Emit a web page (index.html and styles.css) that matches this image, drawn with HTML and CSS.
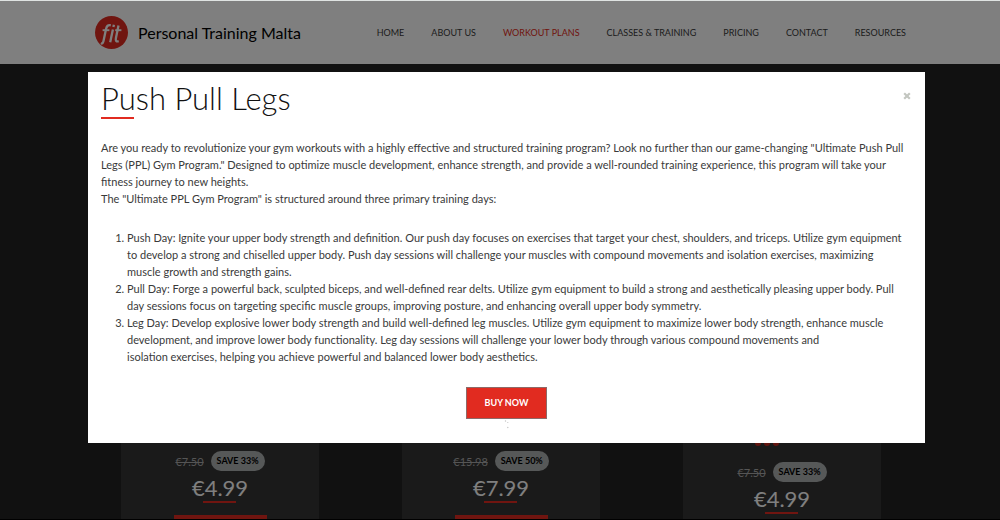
FILE: index.html
```html
<!DOCTYPE html>
<html lang="en">
<head>
<meta charset="utf-8">
<meta name="viewport" content="width=device-width, initial-scale=1">
<title>Personal Training Malta</title>
<link rel="stylesheet" href="styles.css">
</head>
<body>
<div class="page">
  <header class="header">
    <a class="brand" href="#">
      <svg class="logo" viewBox="0 0 33 33" aria-hidden="true">
        <circle cx="16.500" cy="16.500" r="16.500" fill="#e12b20"/>
        <g fill="none" stroke="#fff" stroke-width="2.300">
          <path d="M5.800 27.300c1.500.6 2.300-.4 2.700-2.200l2.600-12.300c.6-2.800 1.900-4.200 4.700-3.500"/>
          <path d="M7.600 14.200h6.800" stroke-width="1.900"/>
          <path d="M17.900 13.400l-2.700 12.900"/>
          <path d="M18.900 8.800l-.5 2.300"/>
          <path d="M23.500 9.600l-2.600 12.600c-.5 2.500.3 3.700 2.800 3"/>
          <path d="M20.200 14.200h6.200" stroke-width="1.900"/>
        </g>
      </svg>
      <span class="brand-name">Personal Training Malta</span>
    </a>
    <nav class="nav">
      <a href="#">HOME</a>
      <a href="#">ABOUT US</a>
      <a class="active" href="#">WORKOUT PLANS</a>
      <a href="#">CLASSES &amp; TRAINING</a>
      <a href="#">PRICING</a>
      <a href="#">CONTACT</a>
      <a href="#">RESOURCES</a>
    </nav>
  </header>
  <main class="plans">
    <article class="card">
      <p class="offer"><del>€7.50</del><span class="save">SAVE 33%</span></p>
      <p class="price">€4.99</p>
      <div class="card-action"></div>
    </article>
    <article class="card">
      <p class="offer"><del>€15.98</del><span class="save">SAVE 50%</span></p>
      <p class="price">€7.99</p>
      <div class="card-action"></div>
    </article>
    <article class="card card-rated">
      <div class="dots"><i></i><i></i><i></i></div>
      <p class="offer"><del>€7.50</del><span class="save">SAVE 33%</span></p>
      <p class="price">€4.99</p>
    </article>
  </main>
</div>
<div class="overlay">
  <section class="dialog" role="dialog" aria-labelledby="dialog-title">
    <div class="dialog-head">
      <h1 id="dialog-title">Push Pull Legs</h1>
      <button class="close" type="button" aria-label="Close">
        <svg viewBox="0 0 8 8" aria-hidden="true"><path d="M1.200 1.200l5.600 5.600M6.800 1.200L1.200 6.800" stroke="#c3c6c0" stroke-width="2.200"/></svg>
      </button>
    </div>
    <p>Are you ready to revolutionize your gym workouts with a highly effective and structured training program? Look no further than our game-changing "Ultimate Push Pull<br>Legs (PPL) Gym Program." Designed to optimize muscle development, enhance strength, and provide a well-rounded training experience, this program will take your<br>fitness journey to new heights.</p>
    <p>The "Ultimate PPL Gym Program" is structured around three primary training days:</p>
    <ol class="days">
      <li>Push Day: Ignite your upper body strength and definition. Our push day focuses on exercises that target your chest, shoulders, and triceps. Utilize gym equipment<br>to develop a strong and chiselled upper body. Push day sessions will challenge your muscles with compound movements and isolation exercises, maximizing<br>muscle growth and strength gains.</li>
      <li>Pull Day: Forge a powerful back, sculpted biceps, and well-defined rear delts. Utilize gym equipment to build a strong and aesthetically pleasing upper body. Pull<br>day sessions focus on targeting specific muscle groups, improving posture, and enhancing overall upper body symmetry.</li>
      <li>Leg Day: Develop explosive lower body strength and build well-defined leg muscles. Utilize gym equipment to maximize lower body strength, enhance muscle<br>development, and improve lower body functionality. Leg day sessions will challenge your lower body through various compound movements and<br>isolation exercises, helping you achieve powerful and balanced lower body aesthetics.</li>
    </ol>
    <div class="actions">
      <button class="buy" type="button">BUY NOW</button>
      <svg class="loader" viewBox="0 0 12 12" aria-hidden="true"><g fill="#c4c4c4"><circle cx="4.500" cy="2" r=".7"/><circle cx="6.800" cy="3.500" r=".6"/><circle cx="6.800" cy="8.500" r=".7"/></g></svg>
    </div>
  </section>
</div>
</body>
</html>
```
FILE: styles.css
```css
* {
  box-sizing: border-box;
}

body {
  margin: 0;
  background: #000;
  font-family: Lato, "Open Sans", sans-serif;
  font-size: 11px;
  line-height: 17px;
  color: #3a3a3a;
}

p, h1, ol {
  margin: 0;
}

a {
  color: inherit;
  text-decoration: none;
}

.page {
  display: flex;
  flex-direction: column;
  height: 100vh;
  overflow: hidden;
  border-top: 1px solid #dfe3e2;
  border-bottom: 1px solid #000;
}

.header {
  display: flex;
  align-items: center;
  justify-content: space-between;
  padding: 15px 94px 15px 95px;
  background: #fff;
}

.brand {
  display: flex;
  align-items: center;
  gap: 10px;
}

.logo {
  width: 33px;
  height: 33px;
}

.brand-name {
  font-size: 16px;
  color: #000;
}

.nav {
  display: flex;
  gap: 27px;
  font-size: 9px;
}

.nav .active {
  color: #e12b20;
}

.plans {
  flex: 1;
  display: grid;
  grid-template-columns: repeat(3, 1fr);
  gap: 83px;
  padding: 60px 119px 0 121px;
  background: #222;
}

.card {
  display: flex;
  flex-direction: column;
  align-items: center;
  padding-top: 327px;
  background: #343434;
}

.card-rated {
  padding-top: 316px;
}

.dots {
  display: flex;
  gap: 3px;
  margin: 0 30px 16px 0;
}

.dots i {
  width: 6px;
  height: 6px;
  border-radius: 3px;
  background: #c52a20;
}

.offer {
  display: flex;
  align-items: center;
  gap: 7px;
  color: #aaa;
}

.save {
  padding: 2px 6px;
  border-radius: 10px;
  font-size: 9px;
  line-height: 16px;
  font-weight: 700;
  color: #000;
  background: #adb0b0;
}

.price {
  display: flex;
  flex-direction: column;
  align-items: center;
  margin-top: 4px;
  font-size: 22px;
  line-height: 26px;
  color: #fff;
}

.price::after {
  content: "";
  width: 33px;
  height: 2px;
  background: #e12b20;
}

.card-action {
  width: 93px;
  height: 31px;
  flex-shrink: 0;
  margin-top: 12px;
  background: #e12b20;
}

.overlay {
  position: fixed;
  inset: 1px 0 0;
  padding: 71px 75px 0 88px;
  background: rgba(0, 0, 0, 0.5);
}

.dialog {
  padding: 8px 13px 12px;
  background: #fff;
}

.dialog-head {
  display: flex;
  align-items: flex-start;
  justify-content: space-between;
  margin-bottom: 20px;
}

h1 {
  font-size: 31px;
  line-height: 37px;
  font-weight: 300;
  color: #111;
}

h1::after {
  content: "";
  display: block;
  width: 33px;
  height: 2px;
  background: #e12b20;
}

.close {
  display: flex;
  margin-top: 12px;
  padding: 0 1px;
  border: 0;
  background: none;
}

.close svg {
  width: 8px;
  height: 8px;
}

.days {
  margin-top: 22px;
  padding-left: 26px;
}

.actions {
  display: flex;
  flex-direction: column;
  align-items: center;
  margin-top: 22px;
}

.buy {
  padding: 6px 18px;
  border: 1px solid #8d6a68;
  font: 700 9px/18px Lato, sans-serif;
  color: #fff;
  background: #e12b20;
}

.loader {
  width: 12px;
  height: 12px;
}
```
